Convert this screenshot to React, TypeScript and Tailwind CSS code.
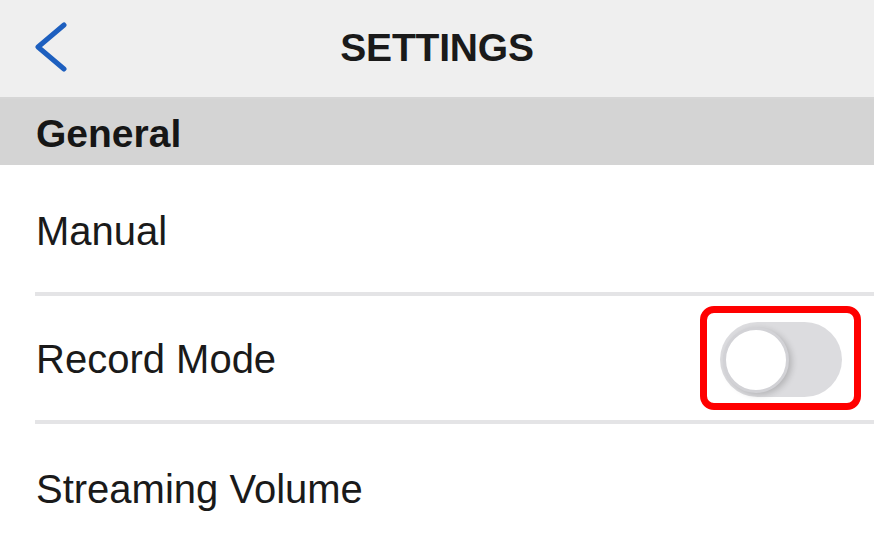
import React from "react";

export default function App() {
  const font = { fontFamily: '"Liberation Sans", Arial, sans-serif' };
  return (
    <div className="w-[874px] h-[546px] overflow-hidden bg-white text-[#1a1a1a]" style={font}>
      {/* Header */}
      <div className="relative h-[99px] bg-[#efefef] border-b-2 border-[#d6d6d6] flex items-center justify-center">
        <svg className="absolute left-[33px] top-[22px]" width="36" height="52" viewBox="0 0 36 52">
          <polyline points="31,3 5,25 31,47" fill="none" stroke="#1d5fbf" strokeWidth="5" strokeLinecap="round" strokeLinejoin="round" />
        </svg>
        <span className="text-[39px] font-bold tracking-[-0.2px] leading-none pb-[2px]">SETTINGS</span>
      </div>
      {/* Section header */}
      <div className="h-[66px] bg-[#d4d4d4] flex items-center pl-[36px]">
        <span className="text-[39px] font-bold leading-none pt-[2px] text-[#161616]">General</span>
      </div>
      {/* Manual */}
      <div className="h-[127px] flex items-center pl-[36px]">
        <span className="text-[40px] leading-none pt-[4px]">Manual</span>
      </div>
      <div className="ml-[35px] h-[4px] bg-[#e4e4e6]" />
      {/* Record Mode */}
      <div className="h-[124px] flex items-center justify-between pl-[36px] pr-[13px]">
        <span className="text-[40px] leading-none pt-[2px]">Record Mode</span>
        <div className="border-[7px] border-[#ff0000] rounded-[14px] pt-[9px] pb-[6px] pl-[13px] pr-[12px]">
          <div className="relative w-[122px] h-[75px] rounded-full bg-[#dcdcdf]">
            <div className="absolute left-[3px] top-[5px] w-[66px] h-[66px] rounded-full bg-white border-[3px] border-[#d2d2d6] shadow-[3px_2px_6px_rgba(0,0,0,0.18)]" />
          </div>
        </div>
      </div>
      <div className="ml-[35px] h-[4px] bg-[#e4e4e6]" />
      {/* Streaming Volume */}
      <div className="h-[124px] flex items-center pl-[36px]">
        <span className="text-[40px] leading-none pt-[6px]">Streaming Volume</span>
      </div>
    </div>
  );
}
